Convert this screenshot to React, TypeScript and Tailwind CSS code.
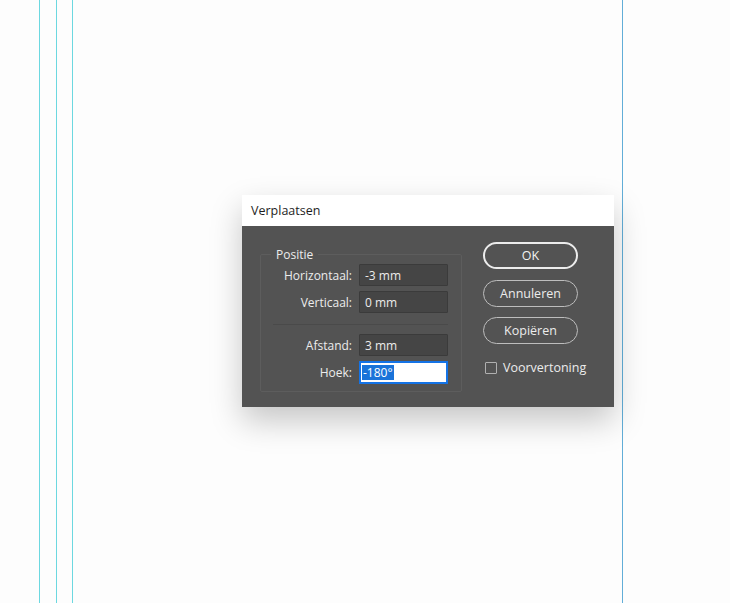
import React from "react";

const font = { fontFamily: '"Segoe UI", "Open Sans", "Noto Sans", sans-serif' };

function Field({ label, value }: { label: string; value: string }) {
  return (
    <div className="flex items-center h-[22px]">
      <div className="w-[92px] pr-[7px] pt-[2px] text-right text-[12px] text-[#ececec] whitespace-nowrap">{label}</div>
      <div className="w-[89px] h-[22px] bg-[#454545] border border-[#3b3b3b] rounded-[1px] flex items-center pl-[5px] pt-[1px] text-[12px] text-[#ececec]">
        {value}
      </div>
    </div>
  );
}

export default function App() {
  return (
    <div className="relative w-[730px] h-[603px] bg-[#fdfdfd] overflow-hidden" style={font}>
      <div className="absolute left-[39px] top-0 h-full w-px bg-[#6cd8e0]" />
      <div className="absolute left-[56px] top-0 h-full w-px bg-[#6cd8e0]" />
      <div className="absolute left-[72px] top-0 h-full w-px bg-[#6cd8e0]" />
      <div className="absolute left-[622px] top-0 h-full w-px bg-[#62aed8]" />

      <div className="pt-[195px] pl-[242px]">
        <div className="relative w-[372px] shadow-[0_14px_30px_rgba(0,0,0,0.22)]">
          <div className="h-[31px] bg-white flex items-center pl-[9px] pt-[1px] text-[12.5px] text-[#1e1e1e]">Verplaatsen</div>
          <div className="h-[181px] bg-[#535353] flex pl-[18px] pt-[28px]">
            <div className="relative w-[202px] h-[138px] border border-[#5d5d5d] rounded-[2px]">
              <div className="absolute left-[10px] -top-[8px] px-[5px] bg-[#535353] text-[12px] leading-[16px] text-[#ececec]">Positie</div>
              <div className="pl-[6px] pt-[9px] flex flex-col">
                <div className="flex flex-col gap-[5px]">
                  <Field label="Horizontaal:" value="-3 mm" />
                  <Field label="Verticaal:" value="0 mm" />
                </div>
                <div className="ml-[6px] mt-[11px] mb-[9px] w-[175px] h-px bg-[#4a4a4a]" />
                <div className="flex flex-col gap-[5px]">
                  <Field label="Afstand:" value="3 mm" />
                  <div className="flex items-center h-[22px]">
                    <div className="w-[92px] pr-[7px] pt-[2px] text-right text-[12px] text-[#ececec]">Hoek:</div>
                    <div className="w-[89px] h-[23px] bg-white border-2 border-[#1473e6] flex items-center pl-[1px]">
                      <span className="bg-[#1a73d9] text-white text-[12px] leading-[15px] px-[1px]">-180°</span>
                    </div>
                  </div>
                </div>
              </div>
            </div>
            <div className="ml-[21px] -mt-[12px] flex flex-col w-[95px]">
              <button className="h-[27px] pt-[2px] rounded-full border-2 border-[#ececec] text-[12.5px] text-[#f2f2f2]">OK</button>
              <button className="mt-[11px] h-[27px] pt-[2px] rounded-full border-[1.5px] border-[#bdbdbd] text-[12.5px] text-[#ececec]">Annuleren</button>
              <button className="mt-[10px] h-[27px] pt-[2px] rounded-full border-[1.5px] border-[#bdbdbd] text-[12.5px] text-[#ececec]">Kopiëren</button>
              <div className="mt-[15px] flex items-center whitespace-nowrap">
                <div className="shrink-0 ml-[2px] w-[12px] h-[12px] border border-[#b0b0b0] rounded-[1px]" />
                <span className="ml-[6px] text-[12.5px] text-[#ececec]">Voorvertoning</span>
              </div>
            </div>
          </div>
        </div>
      </div>
    </div>
  );
}
